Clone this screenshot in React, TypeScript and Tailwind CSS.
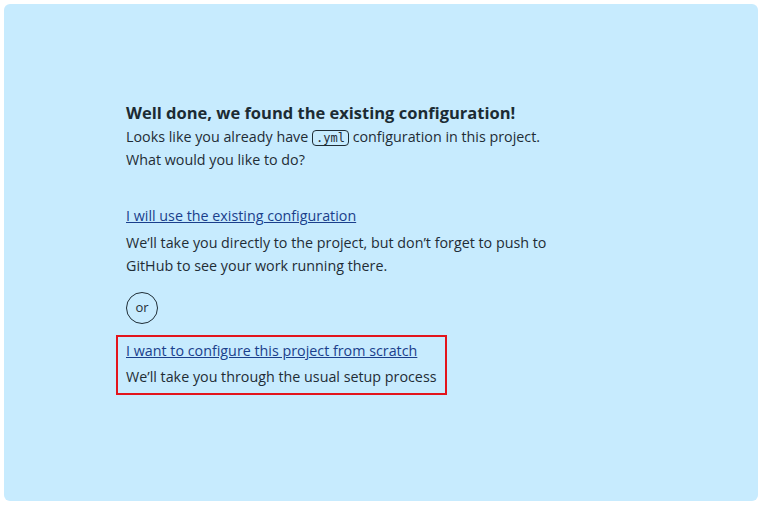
export default function App() {
  return (
    <div className="w-[762px] h-[505px] bg-white p-[4px]" style={{ fontFamily: '"Open Sans", "Noto Sans", sans-serif' }}>
      <div className="h-full w-full rounded-[6px] bg-[#c7ebfe] text-[#1f2d36]">
        <div className="mx-auto w-[510px] pt-[97px]">
          <h1 className="text-[16.5px] font-bold leading-[24px] text-[#1c2b33]">
            Well done, we found the existing configuration!
          </h1>
          <p className="mt-[1px] text-[14.3px] leading-[22px]">
            Looks like you already have{' '}
            <code
              className="rounded-[4px] border border-[#1f2d36] px-[3px] text-[12px]"
              style={{ fontFamily: '"DejaVu Sans Mono", monospace' }}
            >
              .yml
            </code>{' '}
            configuration in this project.
            <br />
            What would you like to do?
          </p>

          <div className="mt-[32px]">
            <a href="#" className="text-[14.3px] leading-[22px] text-[#1a3f8c] underline">
              I will use the existing configuration
            </a>
            <p className="mt-[4px] text-[14.3px] leading-[23px]">
              We’ll take you directly to the project, but don’t forget to push to
              <br />
              GitHub to see your work running there.
            </p>
          </div>

          <div className="mt-[15px] flex h-[32px] w-[32px] items-center justify-center rounded-full border border-[#1f2d36] text-[13px]">
            or
          </div>

          <div className="ml-[-10px] mt-[11px] w-[331px] border-2 border-[#e3141c] px-[8px] pt-[3px] pb-[5px]">
            <a href="#" className="block text-[14.3px] leading-[22px] text-[#1a3f8c] underline">
              I want to configure this project from scratch
            </a>
            <p className="mt-[4px] text-[14.3px] leading-[22px]">We’ll take you through the usual setup process</p>
          </div>
        </div>
      </div>
    </div>
  );
}
